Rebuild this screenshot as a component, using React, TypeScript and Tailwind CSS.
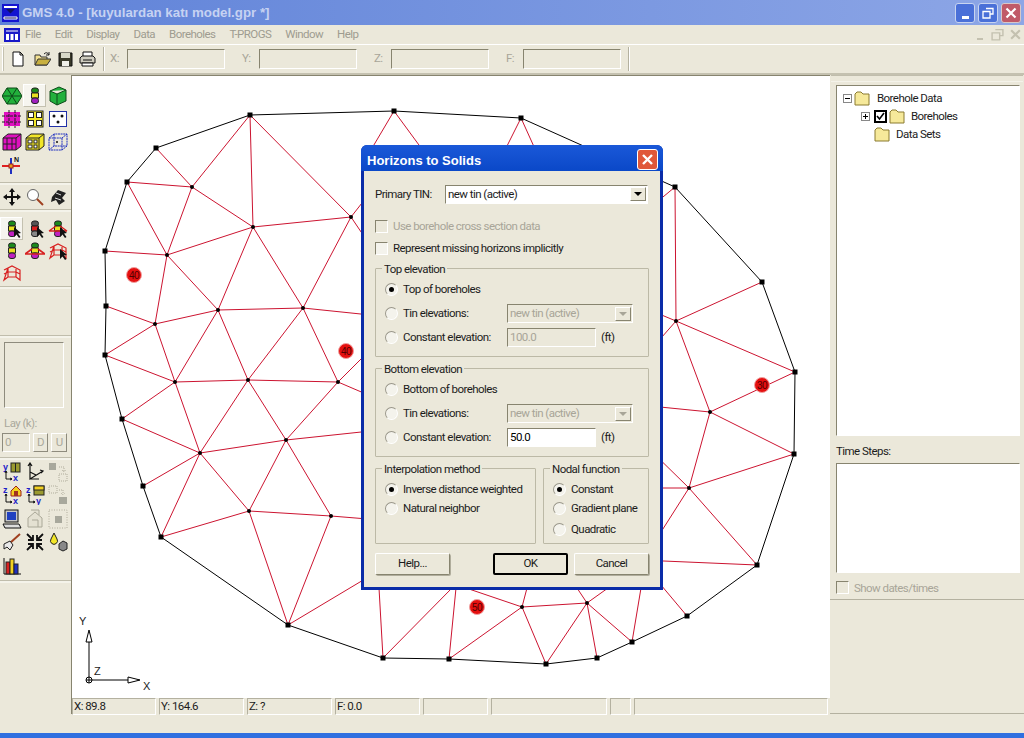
import React from 'react';

type P = [number, number];

const hull: P[] = [
    [250, 115], [394, 111], [521, 118], [675, 187], [762, 282], [795, 372], [794, 454],
    [757, 565], [687, 616], [632, 642], [597, 658], [546, 664], [449, 659], [383, 658], [288, 625],
    [161, 537], [143, 486], [122, 419], [105, 355], [106, 306], [105, 251], [127, 182], [156, 148],
];

const nodes: P[] = [
    [192, 187], [167, 255], [253, 227], [351, 217], [155, 324], [218, 310], [303, 308], [175, 382],
    [248, 380], [338, 382], [200, 453], [286, 440], [249, 511], [331, 516], [676, 321], [710, 412],
    [689, 488], [587, 603], [522, 607],
];

// x1 y1 x2 y2, read off the picture; ends that stop at the dialog run on under it
const red: number[][] = [
    [250, 115, 192, 187], [250, 115, 253, 227], [250, 115, 351, 217], [127, 182, 192, 187], [156, 148, 192, 187],
    [192, 187, 253, 227], [192, 187, 167, 255], [127, 182, 167, 255], [105, 251, 167, 255], [167, 255, 253, 227],
    [253, 227, 351, 217], [253, 227, 218, 310], [253, 227, 303, 308], [167, 255, 218, 310], [167, 255, 155, 324],
    [106, 306, 155, 324], [105, 355, 155, 324], [155, 324, 218, 310], [218, 310, 303, 308], [303, 308, 351, 217],
    [303, 308, 380, 316], [155, 324, 175, 382], [218, 310, 175, 382], [218, 310, 248, 380], [303, 308, 248, 380],
    [303, 308, 338, 382], [175, 382, 248, 380], [248, 380, 338, 382], [105, 355, 175, 382], [122, 419, 175, 382],
    [122, 419, 200, 453], [143, 486, 200, 453], [175, 382, 200, 453], [200, 453, 248, 380], [248, 380, 286, 440],
    [286, 440, 338, 382], [200, 453, 286, 440], [286, 440, 380, 430], [200, 453, 161, 537], [200, 453, 249, 511],
    [161, 537, 249, 511], [286, 440, 249, 511], [286, 440, 331, 516], [249, 511, 331, 516], [249, 511, 288, 625],
    [331, 516, 288, 625], [331, 516, 380, 520], [288, 625, 380, 570], [338, 382, 380, 340], [338, 382, 380, 400],
    [351, 217, 380, 180], [351, 217, 380, 260], [394, 111, 365, 160], [394, 111, 430, 160], [521, 118, 500, 160],
    [521, 118, 540, 160], [675, 187, 640, 216], [675, 187, 676, 321], [676, 321, 762, 282], [676, 321, 795, 372],
    [676, 321, 710, 412], [640, 306, 676, 321], [640, 362, 676, 321], [640, 405, 710, 412], [710, 412, 795, 372],
    [710, 412, 794, 454], [710, 412, 689, 488], [689, 488, 794, 454], [689, 488, 757, 565], [640, 488, 689, 488],
    [640, 440, 689, 488], [640, 565, 689, 488], [640, 560, 757, 565], [640, 560, 687, 616], [641, 588, 632, 642],
    [383, 658, 379, 588], [383, 658, 452, 588], [449, 659, 456, 588], [449, 659, 522, 607], [522, 607, 466, 588],
    [522, 607, 527, 588], [522, 607, 546, 664], [522, 607, 587, 603], [587, 603, 546, 664], [587, 603, 597, 658],
    [587, 603, 632, 642], [587, 603, 608, 588], [587, 603, 577, 588],
];

const Mesh = () => (
    <svg className="w-full h-full" viewBox="72 76 758 621">
        {red.map((e, i) => (
            <line key={i} x1={e[0]} y1={e[1]} x2={e[2]} y2={e[3]} stroke="#cc1430" strokeWidth="1" />
        ))}
        <polygon points={hull.map((p) => p.join(',')).join(' ')} fill="none" stroke="#000" strokeWidth="1" />
        {hull.map((p, i) => (
            <rect key={i} x={p[0] - 2.5} y={p[1] - 2.5} width="5" height="5" fill="#000" />
        ))}
        {nodes.map((p, i) => (
            <circle key={i} cx={p[0]} cy={p[1]} r="2" fill="#000" />
        ))}
        {[[134, 275, '40'], [346, 351, '40'], [762, 385, '30'], [477, 607, '50']].map((p, i) => (
            <g key={i}>
                <circle cx={p[0] as number} cy={p[1] as number} r="7.5" fill="#e41010" stroke="#f0a0a0" />
                <text x={p[0] as number} y={(p[1] as number) + 4} textAnchor="middle" fontSize="10" fill="#500000" fontFamily="Liberation Sans">{p[2]}</text>
            </g>
        ))}
        <line x1="89" y1="680" x2="89" y2="632" stroke="#000" />
        <line x1="89" y1="680" x2="139" y2="680" stroke="#000" />
        <path d="M89 630 L92 642 L86 642 Z" fill="#fff" stroke="#000" />
        <path d="M140 680 L128 677 L128 683 Z" fill="#fff" stroke="#000" />
        <circle cx="89" cy="680" r="3" fill="#fff" stroke="#000" />
        <path d="M86 680 H92 M89 677 V683" stroke="#000" />
        <text x="79" y="625" fontSize="11" fill="#222" fontFamily="Liberation Sans">Y</text>
        <text x="94" y="675" fontSize="11" fill="#222" fontFamily="Liberation Sans">Z</text>
        <text x="143" y="690" fontSize="11" fill="#222" fontFamily="Liberation Sans">X</text>
    </svg>
);

const Ic = ({ children, size = 20 }: { children: React.ReactNode; size?: number }) => (
    <svg width={size} height={size} viewBox="0 0 20 20">{children}</svg>
);

const Stick = ({ c = ['#1c8a1c', '#e8e020', '#c020c0'] }: { c?: string[] }) => (
    <>
        <rect x="6.5" y="2" width="7" height="5" rx="2.5" fill={c[0]} stroke="#222" />
        <rect x="6.5" y="7" width="7" height="5" fill={c[1]} stroke="#222" />
        <rect x="6.5" y="12" width="7" height="5.5" rx="2.5" fill={c[2]} stroke="#222" />
    </>
);

const Arrow = () => <path d="M12 8 L12 18 L14.5 15.5 L17 19 L18.5 18 L16 14.5 L19 14 Z" fill="#111" />;

const Fence = ({ stroke = '#d82020' }: { stroke?: string }) => (
    <path d="M2 7 L10 3 L18 7 V17 L14 14 V6 M6 5 V14 L2 17 Z M6 14 H14 M2 11 L6 9 H14 L18 11" fill="none" stroke={stroke} strokeWidth="1.2" />
);

const Grid = ({ fill, line = '#222', bg = 'none' }: { fill: string; line?: string; bg?: string }) => (
    <>
        <rect x="2" y="2" width="16" height="16" fill={bg} stroke={line} />
        {[3, 11].map((x) => [3, 11].map((y) => <rect key={`${x}${y}`} x={x + 0.5} y={y + 0.5} width="5" height="5" fill={fill} stroke={line} />))}
    </>
);

const tools: Record<string, React.ReactNode> = {
    tin: <path d="M5 2 H15 L20 10 L15 18 H5 L0 10 Z M0 10 H20 M5 2 L15 18 M15 2 L5 18" fill="#22b03c" stroke="#0c4a18" />,
    bore: <Stick c={['#1c8a1c', '#e8e020', '#a020c0']} />,
    solid: <path d="M2 5 L11 1 L18 4 V15 L9 19 L2 15 Z M2 5 L9 8 L18 4 M9 8 V19" fill="#22b03c" stroke="#0c4a18" />,
    mag: <><rect x="2" y="3" width="16" height="14" fill="#e010c0" /><path d="M7 1 V19 M13 1 V19 M0 7 H20 M0 13 H20" stroke="#222" strokeDasharray="3 1" /></>,
    yel: <Grid fill="#fff" bg="#f2e628" />,
    dots: <><rect x="1.5" y="2.5" width="17" height="15" fill="#fff" stroke="#2030a8" /><circle cx="6" cy="7" r="1.5" fill="#111" /><circle cx="14" cy="7" r="1.5" fill="#111" /><circle cx="10" cy="13" r="1.5" fill="#111" /></>,
    mag3: <path d="M1 6 L6 2 H19 V14 L14 18 H1 Z M1 6 H14 V18 M14 6 L19 2 M5 6 V18 M10 6 V18 M1 12 H14" fill="#e010c0" stroke="#222" />,
    yel3: <><path d="M1 6 L6 2 H19 V14 L14 18 H1 Z" fill="#f2e628" stroke="#222" /><path d="M1 6 H14 V18 M14 6 L19 2" stroke="#222" fill="none" /><rect x="3" y="8" width="4" height="3" fill="#fff" stroke="#222" /><rect x="9" y="8" width="3" height="3" fill="#fff" stroke="#222" /><rect x="3" y="13" width="4" height="3" fill="#fff" stroke="#222" /><rect x="9" y="13" width="3" height="3" fill="#fff" stroke="#222" /></>,
    cube: <><path d="M1 6 L6 2 H19 V14 L14 18 H1 Z M1 6 H14 V18 M14 6 L19 2 M6 2 V14 H19 M6 14 L1 18" fill="none" stroke="#2030c0" strokeDasharray="2 0.6" /><circle cx="9" cy="10" r="1" fill="#111" /></>,
    north: <><path d="M0 11 H18" stroke="#e02020" strokeWidth="2" /><path d="M9 3 V19" stroke="#2030c0" strokeWidth="2" /><rect x="7" y="9" width="4" height="4" fill="#e8a020" stroke="#a02020" /><text x="12" y="7" fontSize="7" fontWeight="bold" fill="#111" fontFamily="Liberation Sans">N</text></>,
    move: <path d="M10 1 L13 5 H11 V9 H15 V7 L19 10 L15 13 V11 H11 V15 H13 L10 19 L7 15 H9 V11 H5 V13 L1 10 L5 7 V9 H9 V5 H7 Z" fill="#111" />,
    zoom: <><circle cx="8" cy="8" r="5.5" fill="#fff" stroke="#666" /><path d="M12 12 L18 18" stroke="#a04020" strokeWidth="2" /></>,
    rotate: <><path d="M4 10 L10 3 L18 6 L14 11 L17 14 L11 18 L8 13 L3 15 Z" fill="#222" /><path d="M8 6 L13 8 M7 11 L13 13" stroke="#ddd" /></>,
    boreSel: <><Stick /><Arrow /></>,
    redSel: <><Stick c={['#555', '#d82020', '#888']} /><Arrow /></>,
    fanSel: <><Stick /><path d="M1 12 L8 7 M19 12 L12 7 M1 12 H19" stroke="#d82020" strokeWidth="1.4" /><Arrow /></>,
    boreP: <Stick />,
    fan: <><Stick /><path d="M0 13 L7 8 M20 13 L13 8 M0 13 H20" stroke="#d82020" strokeWidth="1.6" /></>,
    fenceSel: <><Fence /><Arrow /></>,
    fence: <Fence />,
    yx: <><text x="1" y="8" fontSize="9" fontWeight="bold" fill="#2020c8" fontFamily="Liberation Sans">y</text><rect x="9" y="1" width="9" height="9" fill="#9a9a30" stroke="#222" /><path d="M13.5 1 V10" stroke="#222" /><path d="M4 9 V17 H10 M3 11 L4 9 L5 11 M8 16 L10 17 L8 18" stroke="#111" fill="none" /><text x="11" y="19" fontSize="9" fontWeight="bold" fill="#2020c8" fontFamily="Liberation Sans">x</text></>,
    axes: <path d="M5 2 V17 L18 9 M5 17 L14 17 M3 4 L5 1 L7 4 M15 8 L18 9 L16 11 M5 10 L11 13" fill="none" stroke="#111" strokeWidth="1.2" />,
    ghost1: <><rect x="1" y="1" width="7" height="7" fill="#a8a89c" /><path d="M11 5 H16 V9 M14 8 L16 10 L18 8 M11 12 H19 V19 H11 Z" fill="none" stroke="#b0ad9c" strokeDasharray="1 1" /></>,
    zx: <><text x="1" y="8" fontSize="9" fontWeight="bold" fill="#2020c8" fontFamily="Liberation Sans">z</text><path d="M9 6 L14 1 L19 6 V11 H9 Z" fill="#f2d020" stroke="#a02020" /><rect x="12" y="6" width="4" height="5" fill="#a03020" /><path d="M4 9 V17 H10 M3 11 L4 9 L5 11 M8 16 L10 17 L8 18" stroke="#111" fill="none" /><text x="11" y="19" fontSize="9" fontWeight="bold" fill="#2020c8" fontFamily="Liberation Sans">x</text></>,
    zy: <><text x="1" y="8" fontSize="9" fontWeight="bold" fill="#2020c8" fontFamily="Liberation Sans">z</text><rect x="9" y="1" width="10" height="9" fill="#9a9a30" stroke="#222" /><rect x="9" y="1" width="10" height="4" fill="#f2d020" stroke="#222" /><path d="M4 9 V17 H10 M3 11 L4 9 L5 11 M8 16 L10 17 L8 18" stroke="#111" fill="none" /><text x="11" y="19" fontSize="9" fontWeight="bold" fill="#2020c8" fontFamily="Liberation Sans">y</text></>,
    ghost2: <><path d="M1 1 H9 V8 H1 Z M11 5 H15 V9 M13 8 L15 10 L17 8" fill="none" stroke="#b0ad9c" strokeDasharray="1 1" /><rect x="11" y="12" width="8" height="7" fill="#a8a89c" /></>,
    screen: <><rect x="3" y="1" width="13" height="12" fill="#c8c8c8" stroke="#111" /><rect x="5" y="3" width="9" height="8" fill="#2040c0" /><path d="M1 15 H17 L19 19 H3 Z" fill="#ddd" stroke="#111" /></>,
    ghost3: <path d="M3 9 L10 3 L17 9 V18 H3 Z M6 1 H14 V6 M7 11 H13 V18" fill="#e4e1d2" stroke="#aaa898" />,
    ghost4: <><rect x="7" y="7" width="7" height="7" fill="#a8a89c" /><rect x="1" y="1" width="18" height="18" fill="none" stroke="#b0ad9c" strokeDasharray="1 1.5" /></>,
    brush: <><path d="M8 11 L18 2" stroke="#a04020" strokeWidth="2" /><path d="M2 12 L8 9 L11 13 L8 18 L5 15 L2 17 Z" fill="#e8e8e8" stroke="#222" /></>,
    shrink: <path d="M2 2 L8 8 M8 3 V8 H3 M18 2 L12 8 M12 3 V8 H17 M2 18 L8 12 M8 17 V12 H3 M18 18 L12 12 M12 17 V12 H17" stroke="#111" strokeWidth="1.8" fill="none" />,
    drop: <><path d="M6 1 L9 7 A3.5 3.5 0 1 1 3 7 Z" fill="#f2e628" stroke="#222" /><path d="M11 12 L15 9 L19 11 V17 L15 19 L11 17 Z" fill="#888" stroke="#222" /></>,
    bars: <><path d="M2 2 V18 H19" stroke="#111" fill="none" /><rect x="4" y="6" width="4" height="12" fill="#d82020" stroke="#222" /><rect x="8" y="3" width="4" height="15" fill="#f2d020" stroke="#222" /><rect x="12" y="8" width="4" height="10" fill="#2030c0" stroke="#222" /></>,
};

const Tool = ({ name, active }: { name?: string; active?: boolean }) => (
    <div className={`w-[23px] h-[23px] flex items-center justify-center ${active ? 'bg-[#f6f5ef] border-t border-l border-white border-r border-b border-r-[#c4c1b0] border-b-[#c4c1b0]' : ''}`}>
        {name && <Ic>{tools[name]}</Ic>}
    </div>
);

const Sep = () => <div className="h-[3px] border-t border-[#c0bdac] bg-[#f4f3ea] shrink-0" />;

const LeftBar = () => (
    <div className="w-[71px] shrink-0 flex flex-col">
        <div className="h-[107px] pt-[9px] shrink-0 grid grid-cols-3 auto-rows-[23px] w-[69px]">
            <Tool name="tin" /><Tool name="bore" active /><Tool name="solid" />
            <Tool name="mag" /><Tool name="yel" /><Tool name="dots" />
            <Tool name="mag3" /><Tool name="yel3" /><Tool name="cube" />
            <Tool name="north" />
        </div>
        <Sep />
        <div className="h-[24px] shrink-0 grid grid-cols-3 w-[69px] items-center">
            <Tool name="move" /><Tool name="zoom" /><Tool name="rotate" />
        </div>
        <Sep />
        <div className="h-[74px] pt-[5px] shrink-0 grid grid-cols-3 auto-rows-[22px] w-[69px]">
            <Tool name="boreSel" active /><Tool name="redSel" /><Tool name="fanSel" />
            <Tool name="boreP" /><Tool name="fan" /><Tool name="fenceSel" />
            <Tool name="fence" />
        </div>
        <Sep />
        <div className="h-[46px] shrink-0" />
        <Sep />
        <div className="h-[119px] shrink-0 px-[4px] pt-[4px]">
            <div className="w-[60px] h-[66px] border border-t-[#8e8b7d] border-l-[#8e8b7d] border-r-white border-b-white" />
            <div className="mt-[7px] h-4 leading-4 text-[#aaa89c]">Lay (k):</div>
            <div className="-ml-[2px] mt-[2px] flex gap-[3px]">
                <div className="w-[28px] h-[19px] border border-t-[#8e8b7d] border-l-[#8e8b7d] border-r-white border-b-white leading-4 text-[#aaa89c] pl-[2px]">0</div>
                <div className="w-[16px] h-[19px] border border-t-white border-l-white border-r-[#8e8b7d] border-b-[#8e8b7d] leading-4 text-[#aaa89c] text-center">D</div>
                <div className="w-[16px] h-[19px] border border-t-white border-l-white border-r-[#8e8b7d] border-b-[#8e8b7d] leading-4 text-[#aaa89c] text-center">U</div>
            </div>
        </div>
        <Sep />
        <div className="h-[120px] shrink-0 grid grid-cols-3 auto-rows-[23.5px] w-[69px]">
            <Tool name="yx" /><Tool name="axes" /><Tool name="ghost1" />
            <Tool name="zx" /><Tool name="zy" /><Tool name="ghost2" />
            <Tool name="screen" /><Tool name="ghost3" /><Tool name="ghost4" />
            <Tool name="brush" /><Tool name="shrink" /><Tool name="drop" />
            <Tool name="bars" />
        </div>
        <Sep />
    </div>
);

const Sunken = ({ className, children }: { className: string; children?: React.ReactNode }) => (
    <div className={`border border-t-[#87846f] border-l-[#87846f] border-r-white border-b-white ${className}`}>{children}</div>
);

const Radio = ({ on }: { on?: boolean }) => (
    <div className="w-[13px] h-[13px] rounded-full border border-t-[#9a978a] border-l-[#9a978a] border-r-white border-b-white bg-[#f4f3ec] flex items-center justify-center shrink-0">
        {on && <div className="w-[5px] h-[5px] rounded-full bg-black" />}
    </div>
);

const Check = ({ disabled }: { disabled?: boolean }) => (
    <div className={`w-[13px] h-[13px] border border-t-[#87846f] border-l-[#87846f] border-r-white border-b-white shrink-0 ${disabled ? 'bg-[#ebe8da]' : 'bg-[#f4f3ec]'}`} />
);

const RadioRow = ({ label, on, children }: { label: string; on?: boolean; children?: React.ReactNode }) => (
    <div className="flex items-center h-4 whitespace-nowrap">
        <Radio on={on} />
        <span className="ml-[5px] mt-[2px]">{label}</span>
        {children}
    </div>
);

const Group = ({ title, className, children }: { title: string; className: string; children: React.ReactNode }) => (
    <div className={`relative border border-[#bcb9a6] rounded-[1px] pl-[9px] pt-[12px] ${className}`}>
        <span className="absolute -top-[7px] left-[6px] bg-[#ebe8da] px-[2px] leading-[15px] whitespace-nowrap">{title}</span>
        <div className="flex flex-col gap-[8px]">{children}</div>
    </div>
);

const DropArrow = ({ disabled }: { disabled?: boolean }) => (
    <div className="w-[16px] h-[14px] mr-[1px] bg-[#ebe8da] border border-t-white border-l-white border-r-[#87846f] border-b-[#87846f] flex items-center justify-center">
        <div className={`border-x-[4px] border-x-transparent border-t-[4px] ${disabled ? 'border-t-[#a8a598]' : 'border-t-black'}`} />
    </div>
);

const DisabledCombo = () => (
    <Sunken className="absolute left-[122px] -top-[1px] w-[126px] h-[19px] flex items-center justify-between text-[#a8a598] pl-[2px]">
        <span>new tin (active)</span>
        <DropArrow disabled />
    </Sunken>
);

const Edit = ({ value, on }: { value: string; on?: boolean }) => (
    <>
        <Sunken className={`absolute left-[122px] -top-[1px] w-[89px] h-[19px] pl-[2px] leading-[16px] ${on ? 'bg-white text-black' : 'text-[#a8a598]'}`}>{value}</Sunken>
        <span className="absolute left-[216px] top-0">(ft)</span>
    </>
);

const Btn = ({ label, def, className }: { label: string; def?: boolean; className?: string }) => (
    <div className={`w-[75px] h-[22px] flex items-center justify-center rounded-[2px] ${def ? 'border-2 border-black' : 'border border-t-white border-l-white border-r-[#87846f] border-b-[#87846f] shadow-[1px_1px_0_#b0ad9c]'} ${className ?? ''}`}>
        {label}
    </div>
);

const Dialog = () => (
    <div className="absolute left-[361px] top-[145px] w-[302px] h-[445px] rounded-t-[6px] bg-[#0a2ca8] flex flex-col p-[3px] pt-0">
        <div className="h-[26px] shrink-0 -mx-[3px] rounded-t-[6px] bg-gradient-to-b from-[#1a58d8] to-[#0a48c8] flex items-center justify-between pl-[6px] pr-[5px]">
            <span className="text-white font-bold text-[13px] tracking-normal mt-[5px] font-['Liberation_Sans',Arial,sans-serif]">Horizons to Solids</span>
            <div className="w-[21px] h-[21px] mt-[3px] rounded-[3px] border border-white bg-[#e0583a] flex items-center justify-center">
                <svg width="13" height="13" viewBox="0 0 13 13"><path d="M2 2 L11 11 M11 2 L2 11" stroke="#fff" strokeWidth="2.4" /></svg>
            </div>
        </div>
        <div className="flex-1 bg-[#ebe8da] px-[11px] pt-[14px] flex flex-col">
            <div className="flex items-center h-[18px]">
                <span className="w-[70px] mt-[2px]">Primary TIN:</span>
                <Sunken className="w-[203px] h-[19px] bg-white flex items-center justify-between pl-[2px]">
                    <span className="mt-[1px]">new tin (active)</span>
                    <DropArrow />
                </Sunken>
            </div>
            <div className="mt-[15px] h-4 flex items-center text-[#a8a598]"><Check disabled /><span className="ml-[5px] mt-[2px]">Use borehole cross section data</span></div>
            <div className="mt-[6px] h-4 flex items-center"><Check /><span className="ml-[5px] mt-[2px]">Represent missing horizons implicitly</span></div>
            <Group title="Top elevation" className="mt-[12px] h-[89px]">
                <RadioRow label="Top of boreholes" on />
                <div className="relative"><RadioRow label="Tin elevations:" /><DisabledCombo /></div>
                <div className="relative"><RadioRow label="Constant elevation:" /><Edit value="100.0" /></div>
            </Group>
            <Group title="Bottom elevation" className="mt-[11px] h-[89px]">
                <RadioRow label="Bottom of boreholes" />
                <div className="relative"><RadioRow label="Tin elevations:" /><DisabledCombo /></div>
                <div className="relative"><RadioRow label="Constant elevation:" /><Edit value="50.0" on /></div>
            </Group>
            <div className="mt-[11px] flex gap-[7px]">
                <Group title="Interpolation method" className="w-[161px] h-[76px]">
                    <RadioRow label="Inverse distance weighted" on />
                    <div className="-mt-[5px]"><RadioRow label="Natural neighbor" /></div>
                </Group>
                <Group title="Nodal function" className="w-[106px] h-[76px]">
                    <RadioRow label="Constant" on />
                    <div className="-mt-[5px]"><RadioRow label="Gradient plane" /></div>
                    <div className="-mt-[3px]"><RadioRow label="Quadratic" /></div>
                </Group>
            </div>
            <div className="mt-[9px] flex">
                <Btn label="Help..." />
                <Btn label="OK" def className="ml-[43px]" />
                <Btn label="Cancel" className="ml-[6px]" />
            </div>
        </div>
    </div>
);

const Folder = () => (
    <svg width="16" height="15" viewBox="0 0 16 15">
        <path d="M1 3 L3 1 H7 L9 3 H15 V14 H1 Z" fill="#f6e99a" stroke="#8a7a30" />
    </svg>
);

const TreeRow = ({ indent, children }: { indent: string; children: React.ReactNode }) => (
    <div className={`flex items-center h-[18px] ${indent}`}>{children}</div>
);

const Plus = ({ minus }: { minus?: boolean }) => (
    <div className="relative w-[9px] h-[9px] border border-[#888] bg-white shrink-0">
        <div className="absolute left-[1px] top-[3px] w-[5px] h-px bg-black" />
        {!minus && <div className="absolute left-[3px] top-[1px] w-px h-[5px] bg-black" />}
    </div>
);

const RightPanel = () => (
    <div className="flex-1 min-w-0 flex flex-col">
        <div className="h-[7px] mx-[1px] border-t border-b border-t-[#c0bdac] border-b-[#f4f3ea] shrink-0" />
        <div className="px-[6px] pt-[3px]">
            <Sunken className="w-[184px] h-[351px] bg-white pt-[3px] pl-[6px]">
                <TreeRow indent="">
                    <Plus minus />
                    <span className="ml-[2px]"><Folder /></span>
                    <span className="ml-[7px] mt-[2px]">Borehole Data</span>
                </TreeRow>
                <TreeRow indent="pl-[18px]">
                    <Plus />
                    <div className="ml-[4px] w-[13px] h-[13px] border-2 border-black bg-white flex items-center justify-center">
                        <svg width="9" height="9" viewBox="0 0 9 9"><path d="M1 4 L3.5 7 L8 1" stroke="#000" strokeWidth="1.6" fill="none" /></svg>
                    </div>
                    <span className="ml-[2px]"><Folder /></span>
                    <span className="ml-[6px] mt-[2px]">Boreholes</span>
                </TreeRow>
                <TreeRow indent="pl-[31px]">
                    <Folder />
                    <span className="ml-[6px] mt-[2px]">Data Sets</span>
                </TreeRow>
            </Sunken>
        </div>
        <div className="px-[6px] mt-[7px] h-4 leading-4">Time Steps:</div>
        <div className="px-[6px] mt-[4px]">
            <Sunken className="w-[184px] h-[110px] bg-white" />
        </div>
        <div className="px-[6px] mt-[6px] h-4 flex items-center text-[#a8a598]"><Check disabled /><span className="ml-[5px] mt-[3px]">Show dates/times</span></div>
        <div className="mt-[4px] flex-1 border-t border-b border-[#b4b1a0]" />
    </div>
);

const statusCells = [
    { w: 'w-[84px]', t: 'X: 89.8' },
    { w: 'w-[85px]', t: 'Y: 164.6' },
    { w: 'w-[85px]', t: 'Z: ?' },
    { w: 'w-[85px]', t: 'F: 0.0' },
    { w: 'w-[65px]', t: '' },
    { w: 'w-[116px]', t: '' },
    { w: 'w-[21px]', t: '' },
    { w: 'w-[194px]', t: '' },
];

const Field = ({ label, className }: { label: string; className: string }) => (
    <>
        <span className={`text-[#a8a598] ${className}`}>{label}</span>
        <Sunken className="w-[98px] h-[20px]" />
    </>
);

const TopIcons = () => (
    <>
        <div className="ml-[2px] w-[2px] h-[24px] border-l border-r border-l-white border-r-[#c4c1b0]" />
        <svg className="ml-[6px]" width="16" height="16" viewBox="0 0 16 16"><path d="M3 1 H10 L13 4 V15 H3 Z M10 1 V4 H13" fill="#fff" stroke="#111" /></svg>
        <svg className="ml-[8px]" width="17" height="16" viewBox="0 0 17 16"><path d="M1 4 H6 L7 6 H13 V14 H1 Z" fill="#f2e090" stroke="#333" /><path d="M1 14 L4 8 H17 L13 14 Z" fill="#c8b040" stroke="#333" /><path d="M10 3 Q13 0 15 4 M15 1 V4 H12" stroke="#222" fill="none" /></svg>
        <svg className="ml-[7px]" width="15" height="15" viewBox="0 0 15 15"><path d="M1 1 H14 V14 H1 Z" fill="#3a3a2a" stroke="#111" /><rect x="3" y="1" width="9" height="5" fill="#d8d8c8" /><rect x="4" y="9" width="7" height="5" fill="#f0f0e8" /></svg>
        <svg className="ml-[6px]" width="17" height="16" viewBox="0 0 17 16"><path d="M4 1 H13 V6 H4 Z" fill="#fff" stroke="#111" /><path d="M1 7 L3 5 H14 L16 7 V12 H1 Z" fill="#cfcdc0" stroke="#111" /><path d="M3 12 H14 V15 H3 Z" fill="#fff" stroke="#111" /><path d="M4 9 H13" stroke="#111" /></svg>
    </>
);

const App = () => (
    <div className="w-[1024px] h-[738px] overflow-hidden relative bg-[#ebe8da] flex flex-col font-['Roboto',Arial,sans-serif] text-[11.5px] tracking-[-0.55px] text-[#1c1c1c]">
        <div className="h-[25px] shrink-0 bg-gradient-to-r from-[#5f82d8] to-[#8da6e6] flex items-center pl-[2px] pr-[3px]">
            <svg width="17" height="18" viewBox="0 0 17 18">
                <rect width="17" height="18" fill="#1414d0" />
                <path d="M2 3 H15" stroke="#fff" strokeWidth="2" />
                <path d="M4 5 H13 L8.5 9.5 Z" fill="#101060" />
                <path d="M2 13 H15 V15 H2 Z" fill="#101060" stroke="#fff" strokeWidth="1" />
            </svg>
            <span className="ml-[3px] text-[13.3px] tracking-normal font-bold text-[#c6d2f2] font-['Liberation_Sans',Arial,sans-serif]">GMS 4.0 - [kuyulardan katı model.gpr *]</span>
            <div className="ml-auto flex gap-[3px]">
                <div className="w-[20px] h-[20px] rounded-[3px] border border-[#c8d4f0] bg-[#4a70d8] flex items-end justify-center pb-[3px]">
                    <div className="w-[7px] h-[3px] bg-white" />
                </div>
                <div className="w-[20px] h-[20px] rounded-[3px] border border-[#c8d4f0] bg-[#4a70d8] flex items-center justify-center">
                    <svg width="12" height="12" viewBox="0 0 12 12"><path d="M4 1.5 H11 V7 H8 M1 4.5 H8 V11 H1 Z" fill="none" stroke="#fff" strokeWidth="1.3" /></svg>
                </div>
                <div className="w-[20px] h-[20px] rounded-[3px] border border-[#d8c8c8] bg-[#c05a68] flex items-center justify-center">
                    <svg width="12" height="12" viewBox="0 0 12 12"><path d="M1.5 1.5 L10.5 10.5 M10.5 1.5 L1.5 10.5" stroke="#fff" strokeWidth="2.2" /></svg>
                </div>
            </div>
        </div>
        <div className="h-[20px] shrink-0 flex items-center pl-[4px] text-[#9e9c90] border-b border-white">
            <svg width="16" height="14" viewBox="0 0 16 14">
                <rect width="16" height="14" fill="#1818c8" />
                <path d="M2 3 H14" stroke="#fff" />
                <rect x="2" y="6" width="3" height="6" fill="#fff" />
                <rect x="6.5" y="6" width="3" height="6" fill="#fff" />
                <rect x="11" y="6" width="3" height="6" fill="#fff" />
            </svg>
            <span className="ml-[5px]">File</span>
            <span className="ml-[14px]">Edit</span>
            <span className="ml-[14px]">Display</span>
            <span className="ml-[14px]">Data</span>
            <span className="ml-[14px]">Boreholes</span>
            <span className="ml-[14px]">T-PROGS</span>
            <span className="ml-[14px]">Window</span>
            <span className="ml-[14px]">Help</span>
            <div className="ml-auto mr-[2px] flex gap-[5px] items-center">
                <div className="w-[13px] h-[13px] flex items-end justify-center pb-[1px]"><div className="w-[6px] h-[2px] bg-[#c4c1b0]" /></div>
                <svg width="13" height="13" viewBox="0 0 12 12"><path d="M4 1.5 H11 V7 H8 M1 4.5 H8 V11 H1 Z" fill="none" stroke="#c4c1b0" strokeWidth="1.3" /></svg>
                <svg width="13" height="13" viewBox="0 0 12 12"><path d="M2 2 L10 10 M10 2 L2 10" stroke="#c4c1b0" strokeWidth="2" /></svg>
            </div>
        </div>
        <div className="h-[30px] shrink-0 flex items-center border-b-2 border-b-[#c4c1b0]">
            <TopIcons />
            <div className="ml-[7px] w-[2px] h-[24px] border-l border-r border-l-[#b4b1a0] border-r-white" />
            <Field label="X:" className="ml-[5px] w-[17px]" />
            <Field label="Y:" className="ml-[17px] w-[17px]" />
            <Field label="Z:" className="ml-[17px] w-[17px]" />
            <Field label="F:" className="ml-[17px] w-[17px]" />
            <div className="ml-[7px] w-[2px] h-[24px] border-l border-r border-l-[#b4b1a0] border-r-white" />
        </div>
        <div className="flex-1 flex min-h-0">
            <LeftBar />
            <div className="w-[759px] shrink-0 flex flex-col border-l border-t border-l-[#87846f] border-t-[#87846f]">
                <div className="flex-1 min-h-0 bg-white"><Mesh /></div>
                <div className="h-[17px] shrink-0 flex gap-[3px] border-t border-white">
                    {statusCells.map((c, i) => (
                        <div key={i} className={`${c.w} h-[17px] border border-t-[#b4b1a0] border-l-[#b4b1a0] border-r-white border-b-white leading-[15px] pl-[1px] shrink-0`}>{c.t}</div>
                    ))}
                </div>
            </div>
            <RightPanel />
        </div>
        <div className="h-[19px] shrink-0" />
        <div className="h-[5px] shrink-0 bg-[#2f6fe0]" />
        <Dialog />
    </div>
);

export default App;
